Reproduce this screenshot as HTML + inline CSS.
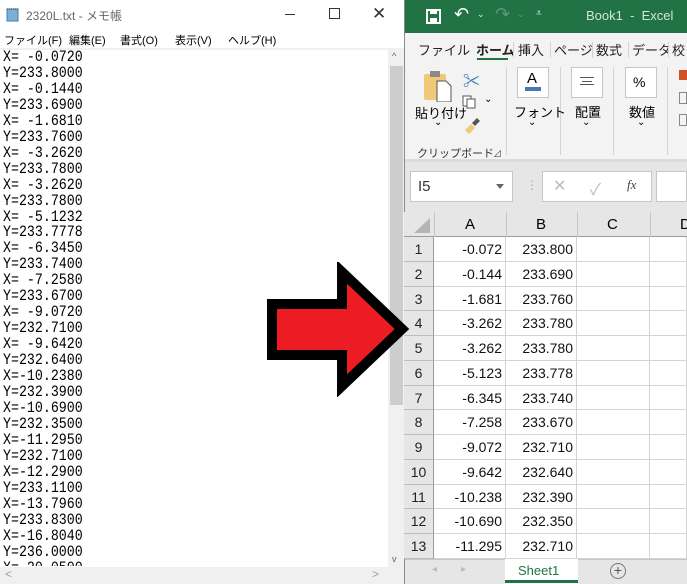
<!DOCTYPE html>
<html><head><meta charset="utf-8">
<style>
*{margin:0;padding:0;box-sizing:border-box}
body{width:687px;height:584px;position:relative;overflow:hidden;background:#fff;font-family:"Liberation Sans","Noto Sans CJK JP",sans-serif}
.a{position:absolute}
.np{left:0;top:0;width:404px;height:584px;background:#fff}
.txt{left:3px;top:50px;font-family:"Liberation Mono","Noto Sans CJK JP",monospace;font-size:16px;line-height:15.95px;color:#000;transform:scaleX(0.83);transform-origin:0 0;white-space:pre}
.menu{font-size:11px;color:#000;top:32px}
.xl{left:404px;top:0;width:283px;height:584px;background:#e6e6e6;border-left:1px solid #8a8a8a}
.tab{top:40px;font-size:13px;color:#222}
.sep{width:1px;background:#d4d4d4}
.rh{left:404px;width:30px;background:#e6e6e6;border-bottom:1px solid #bcbcbc;border-right:1px solid #9b9b9b;font-size:14px;text-align:center;color:#222}
.c{background:#fff;border-right:1px solid #d4d4d4;border-bottom:1px solid #d4d4d4;font-size:14px;text-align:right;padding-right:3px;color:#111}
</style></head><body>
<div class="a np">
  <svg class="a" style="left:6px;top:7px" width="13" height="15"><rect x="1" y="2" width="11" height="12" fill="#7ab0d8" stroke="#4a7aa0"/><line x1="1" y1="2" x2="12" y2="2" stroke="#333" stroke-dasharray="1 1"/></svg>
  <div class="a" style="left:26px;top:7px;font-size:12px;color:#666">2320L.txt - メモ帳</div>
  <div class="a" style="left:285px;top:14px;width:10px;height:1px;background:#333"></div>
  <div class="a" style="left:329px;top:8px;width:11px;height:11px;border:1px solid #333"></div>
  <div class="a" style="left:372px;top:4px;font-size:17px;color:#333">✕</div>
  <div class="a menu" style="left:4px">ファイル(F)</div>
  <div class="a menu" style="left:69px">編集(E)</div>
  <div class="a menu" style="left:120px">書式(O)</div>
  <div class="a menu" style="left:175px">表示(V)</div>
  <div class="a menu" style="left:228px">ヘルプ(H)</div>
  <div class="a" style="left:0;top:48px;width:404px;height:2px;background:#f0f0f0"></div>
  <div class="a txt">X= -0.0720
Y=233.8000
X= -0.1440
Y=233.6900
X= -1.6810
Y=233.7600
X= -3.2620
Y=233.7800
X= -3.2620
Y=233.7800
X= -5.1232
Y=233.7778
X= -6.3450
Y=233.7400
X= -7.2580
Y=233.6700
X= -9.0720
Y=232.7100
X= -9.6420
Y=232.6400
X=-10.2380
Y=232.3900
X=-10.6900
Y=232.3500
X=-11.2950
Y=232.7100
X=-12.2900
Y=233.1100
X=-13.7960
Y=233.8300
X=-16.8040
Y=236.0000
X=-20.0500</div>
  <div class="a" style="left:0;top:566px;width:388px;height:18px;background:#fff"></div>
  <div class="a" style="left:388px;top:50px;width:16px;height:517px;background:#f0f0f0"></div>
  <div class="a" style="left:390px;top:66px;width:13px;height:339px;background:#cdcdcd"></div>
  <div class="a" style="left:392px;top:51px;font-size:9px;color:#606060">^</div>
  <div class="a" style="left:392px;top:554px;font-size:9px;color:#606060">v</div>
  <div class="a" style="left:0;top:567px;width:404px;height:17px;background:#f0f0f0"></div>
  <div class="a" style="left:5px;top:567px;font-size:12px;color:#a0a0a0">&lt;</div>
  <div class="a" style="left:372px;top:567px;font-size:12px;color:#a0a0a0">&gt;</div>
</div>

<div class="a xl"></div>
<div class="a" style="left:405px;top:0;width:282px;height:33px;background:#217346"></div>
<svg class="a" style="left:426px;top:9px" width="15" height="15"><rect x="1" y="1" width="13" height="13" fill="none" stroke="#fff" stroke-width="2"/><rect x="4" y="1" width="7" height="4" fill="#fff"/><rect x="4" y="9" width="7" height="5" fill="#fff"/></svg>
<div class="a" style="left:454px;top:4px;color:#fff;font-size:18px">↶</div>
<div class="a" style="left:477px;top:9px;color:#cfe;font-size:9px">⌄</div>
<div class="a" style="left:495px;top:4px;color:#5a9a76;font-size:18px">↷</div>
<div class="a" style="left:517px;top:9px;color:#5a9a76;font-size:9px">⌄</div>
<div class="a" style="left:536px;top:8px;color:#fff;font-size:10px">⩡</div>
<div class="a" style="left:586px;top:8px;color:#d0e6d8;font-size:13px">Book1&nbsp; -&nbsp; Excel</div>
<div class="a" style="left:405px;top:33px;width:282px;height:127px;background:#f3f3f3"></div>
<div class="a tab" style="left:418px">ファイル</div>
<div class="a tab" style="left:476px;font-weight:bold">ホーム</div>
<div class="a" style="left:477px;top:58px;width:31px;height:2px;background:#217346"></div>
<div class="a tab" style="left:518px">挿入</div>
<div class="a tab" style="left:554px">ページ</div>
<div class="a tab" style="left:596px">数式</div>
<div class="a tab" style="left:632px">データ</div>
<div class="a tab" style="left:672px">校</div>
<div class="a sep" style="left:513px;top:42px;height:16px"></div>
<div class="a sep" style="left:550px;top:42px;height:16px"></div>
<div class="a sep" style="left:592px;top:42px;height:16px"></div>
<div class="a sep" style="left:628px;top:42px;height:16px"></div>
<div class="a sep" style="left:668px;top:42px;height:16px"></div>
<svg class="a" style="left:424px;top:70px" width="30" height="32"><rect x="0" y="4" width="22" height="26" rx="2" fill="#f0c878"/><rect x="6" y="1" width="10" height="6" fill="#8a8a8a"/><path d="M13 11h9l5 5v16H13z" fill="#fff" stroke="#555"/></svg>
<div class="a" style="left:463px;top:67px;color:#3c7ac0;font-size:17px">✂</div>
<svg class="a" style="left:462px;top:95px" width="14" height="14"><rect x="1" y="1" width="8" height="10" fill="#fff" stroke="#555"/><rect x="5" y="4" width="8" height="9" fill="#fff" stroke="#555"/></svg>
<div class="a" style="left:484px;top:94px;font-size:10px">⌄</div>
<svg class="a" style="left:463px;top:116px" width="18" height="18"><path d="M2 14l6-6 4 4-6 6z" fill="#f0c878"/><path d="M9 7l5-5 3 3-5 5z" fill="#555"/></svg>
<div class="a" style="left:415px;top:103px;font-size:13px">貼り付け</div>
<div class="a" style="left:434px;top:117px;font-size:10px">⌄</div>
<div class="a" style="left:417px;top:145px;font-size:11px;color:#333">クリップボード</div>
<div class="a" style="left:493px;top:147px;font-size:9px;color:#555">⊿</div>
<div class="a sep" style="left:506px;top:67px;height:88px"></div>
<div class="a sep" style="left:560px;top:67px;height:88px"></div>
<div class="a sep" style="left:613px;top:67px;height:88px"></div>
<div class="a sep" style="left:667px;top:67px;height:88px"></div>
<div class="a" style="left:517px;top:67px;width:32px;height:31px;background:#fff;border:1px solid #c6c6c6"></div>
<div class="a" style="left:527px;top:70px;font-size:15px">A</div>
<div class="a" style="left:525px;top:87px;width:16px;height:4px;background:#4a76b4"></div>
<div class="a" style="left:514px;top:102px;font-size:13px">フォント</div>
<div class="a" style="left:528px;top:117px;font-size:10px">⌄</div>
<div class="a" style="left:571px;top:67px;width:32px;height:31px;background:#fff;border:1px solid #c6c6c6"></div>
<div class="a" style="left:580px;top:77px;width:14px;height:8px;border-top:1px solid #555;border-bottom:1px solid #555"></div>
<div class="a" style="left:582px;top:81px;width:10px;height:1px;background:#555"></div>
<div class="a" style="left:575px;top:102px;font-size:13px">配置</div>
<div class="a" style="left:582px;top:117px;font-size:10px">⌄</div>
<div class="a" style="left:625px;top:67px;width:32px;height:31px;background:#fff;border:1px solid #c6c6c6"></div>
<div class="a" style="left:633px;top:74px;font-size:14px">%</div>
<div class="a" style="left:629px;top:102px;font-size:13px">数値</div>
<div class="a" style="left:637px;top:117px;font-size:10px">⌄</div>
<div class="a" style="left:679px;top:70px;width:8px;height:10px;background:#d0502a"></div>
<div class="a" style="left:679px;top:92px;width:8px;height:12px;border:1px solid #888"></div>
<div class="a" style="left:679px;top:114px;width:8px;height:12px;border:1px solid #888"></div>
<div class="a" style="left:405px;top:159px;width:282px;height:3px;background:#dcdcdc"></div>

<div class="a" style="left:410px;top:171px;width:103px;height:31px;background:#fff;border:1px solid #c6c6c6"></div>
<div class="a" style="left:418px;top:178px;font-size:15px;color:#333">I5</div>
<div class="a" style="left:496px;top:184px;border:4px solid transparent;border-top:5px solid #666"></div>
<div class="a" style="left:526px;top:178px;color:#aaa;font-size:12px">⋮</div>
<div class="a" style="left:542px;top:171px;width:110px;height:31px;background:#fff;border:1px solid #c6c6c6"></div>
<div class="a" style="left:553px;top:176px;color:#bbb;font-size:16px">✕</div>
<div class="a" style="left:590px;top:176px;color:#bbb;font-size:16px">✓</div>
<div class="a" style="left:627px;top:177px;color:#444;font-size:13px;font-style:italic;font-family:'Liberation Serif',serif">fx</div>
<div class="a" style="left:656px;top:171px;width:31px;height:31px;background:#fff;border:1px solid #c6c6c6"></div>

<div class="a" style="left:404px;top:212px;width:283px;height:25px;background:#e6e6e6;border-bottom:1px solid #9b9b9b"></div>
<svg class="a" style="left:412px;top:216px" width="20" height="18"><path d="M18 2L18 17L2 17z" fill="#b4b4b4"/></svg>
<div class="a" style="left:434px;top:212px;width:1px;height:25px;background:#c6c6c6"></div>
<div class="a" style="left:506px;top:212px;width:1px;height:25px;background:#c6c6c6"></div>
<div class="a" style="left:577px;top:212px;width:1px;height:25px;background:#c6c6c6"></div>
<div class="a" style="left:650px;top:212px;width:1px;height:25px;background:#c6c6c6"></div>
<div class="a" style="left:465px;top:216px;font-size:15px">A</div>
<div class="a" style="left:536px;top:216px;font-size:15px">B</div>
<div class="a" style="left:607px;top:216px;font-size:15px">C</div>
<div class="a" style="left:680px;top:216px;font-size:15px">D</div>

<div id="g"></div>
<script>
var d=[["-0.072","233.800"],["-0.144","233.690"],["-1.681","233.760"],["-3.262","233.780"],["-3.262","233.780"],["-5.123","233.778"],["-6.345","233.740"],["-7.258","233.670"],["-9.072","232.710"],["-9.642","232.640"],["-10.238","232.390"],["-10.690","232.350"],["-11.295","232.710"]];
var h="";
for(var i=0;i<13;i++){var t=237+i*24.77;var s="top:"+t+"px;height:24.77px;line-height:24px;";
h+='<div class="a rh" style="'+s+'">'+(i+1)+'</div>';
h+='<div class="a c" style="left:434px;width:72px;'+s+'">'+d[i][0]+'</div>';
h+='<div class="a c" style="left:506px;width:71px;'+s+'">'+d[i][1]+'</div>';
h+='<div class="a c" style="left:577px;width:73px;'+s+'"></div>';
h+='<div class="a c" style="left:650px;width:37px;'+s+'"></div>';}
document.getElementById("g").innerHTML=h;
</script>
<div class="a" style="left:405px;top:559px;width:282px;height:25px;background:#e6e6e6;border-top:1px solid #c6c6c6"></div>
<div class="a" style="left:432px;top:564px;color:#bbb;font-size:10px">◂</div>
<div class="a" style="left:461px;top:564px;color:#bbb;font-size:10px">▸</div>
<div class="a" style="left:505px;top:559px;width:73px;height:25px;background:#fff"></div>
<div class="a" style="left:505px;top:580px;width:73px;height:3px;background:#217346"></div>
<div class="a" style="left:518px;top:563px;font-size:13px;color:#217346">Sheet1</div>
<div class="a" style="left:610px;top:563px;width:16px;height:16px;border:1px solid #777;border-radius:50%;text-align:center;line-height:13px;font-size:14px;color:#555">+</div>

<svg class="a" style="left:262px;top:262px" width="150" height="135"><polygon points="10,42 80,42 80,10 140,67 80,124 80,93 10,93" fill="#ed1c24" stroke="#000" stroke-width="10" stroke-linejoin="miter"/></svg>
</body></html>
